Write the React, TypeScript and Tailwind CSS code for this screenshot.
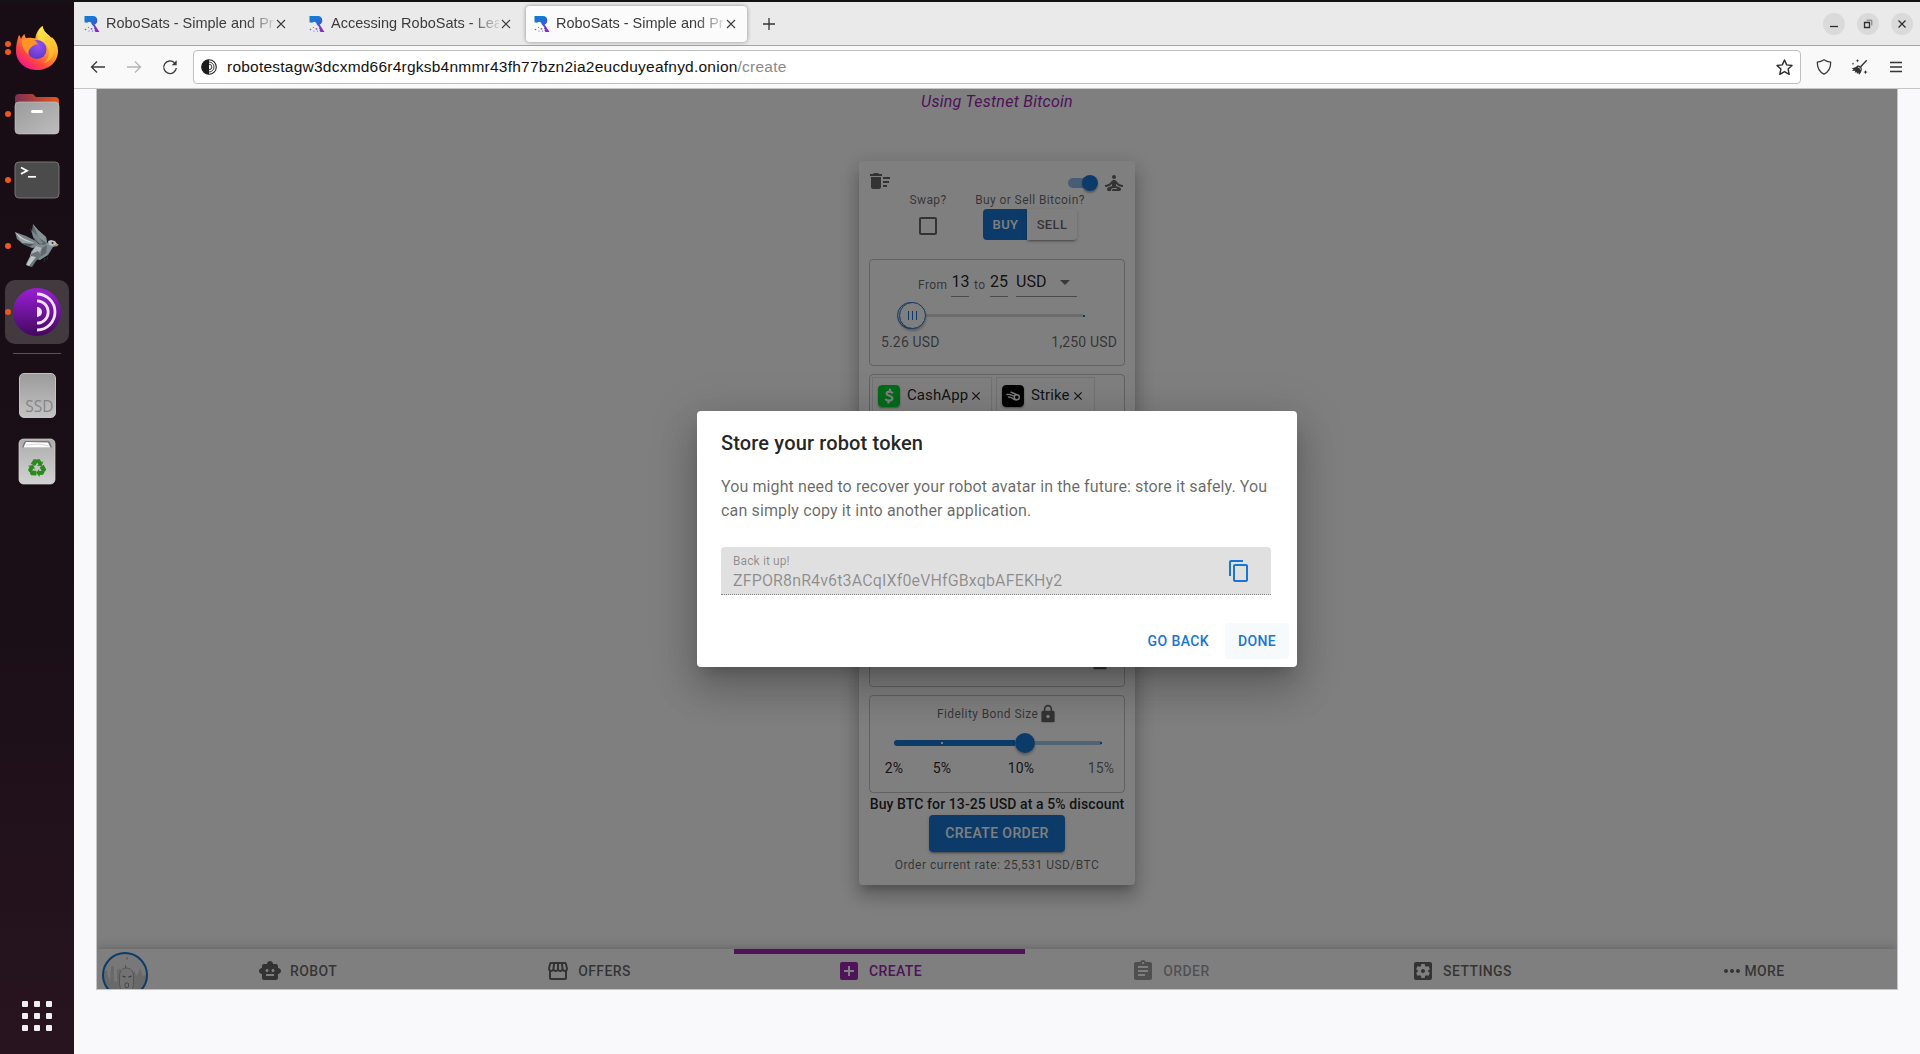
import React from 'react';
import {
  MdAddBox,
  MdArrowDropDown,
  MdAssignment,
  MdCheckBoxOutlineBlank,
  MdClose,
  MdContentCopy,
  MdDeleteSweep,
  MdLock,
  MdMoreHoriz,
  MdOutlineStorefront,
  MdSelfImprovement,
  MdSettingsApplications,
  MdSmartToy,
} from 'react-icons/md';

/* ---------- Dock ---------- */

function FirefoxIcon() {
  return (
    <svg width="44" height="46" viewBox="0 0 44 46">
      <defs>
        <linearGradient id="ffBody" x1="0.85" y1="0.1" x2="0.2" y2="0.95">
          <stop offset="0" stopColor="#ffe94a" />
          <stop offset="0.4" stopColor="#ff9a2a" />
          <stop offset="0.72" stopColor="#ff4a3f" />
          <stop offset="1" stopColor="#f0148a" />
        </linearGradient>
        <radialGradient id="ffGlobe" cx="0.55" cy="0.3" r="0.7">
          <stop offset="0" stopColor="#9a4ff5" />
          <stop offset="1" stopColor="#5a3bc8" />
        </radialGradient>
        <linearGradient id="ffFlame" x1="0" y1="0" x2="0.5" y2="1">
          <stop offset="0" stopColor="#fff24f" />
          <stop offset="1" stopColor="#ffb02a" />
        </linearGradient>
      </defs>
      <path
        d="M4 10c1 1 1.500 2.500 2 4 .8-2.200 2-3.700 3.500-5 .2 2 .8 3.300 1.800 4.300 3-.8 6-.5 9 .2C21 8 24 3 27.500 1c.5 4 3 7 6 9 1 .8 2 2 2.500 3.500l.8-1.500c4 4 6.200 8.500 6.200 14 0 11-9 19-21 19S1 36.500 1 26c0-6 1.200-11.500 3-16z"
        fill="url(#ffBody)"
      />
      <path d="M27.500 1c.5 4 3 7 6 9 6 5 7.500 11 5.500 18-1.500 5-5.500 9-10 10 5-4 6-10 4-15-1.500-4-6-6-9-8-3-3-1-10 3.500-14z" fill="url(#ffFlame)" />
      <circle cx="22" cy="24.500" r="9.500" fill="url(#ffGlobe)" />
      <path d="M7 15c5-2.500 9-1.500 14 1.200l2 3c-3 .3-5 1.300-7 3.300-2 1.800-3 4-2.500 7C9 26 6 20 7 15z" fill="#ff9328" />
    </svg>
  );
}

function FilesIcon() {
  return (
    <svg width="46" height="42" viewBox="0 0 46 42">
      <defs>
        <linearGradient id="flBack" x1="0" x2="1">
          <stop offset="0" stopColor="#7c2f52" />
          <stop offset="1" stopColor="#e9541f" />
        </linearGradient>
        <linearGradient id="flFront" x1="0" y1="0" x2="1" y2="1">
          <stop offset="0" stopColor="#9b9b9b" />
          <stop offset="1" stopColor="#bdbdbd" />
        </linearGradient>
      </defs>
      <path d="M1 5a4 4 0 0 1 4-4h14l3 3h19a4 4 0 0 1 4 4v12H1z" fill="url(#flBack)" />
      <rect x="1" y="9" width="44" height="32" rx="4" fill="url(#flFront)" stroke="#c9c9c9" strokeWidth=".6" />
      <rect x="17" y="17" width="12" height="3" rx="1.500" fill="#fff" />
    </svg>
  );
}

function TerminalIcon() {
  return (
    <svg width="46" height="38" viewBox="0 0 46 38">
      <rect x="1" y="1" width="44" height="36" rx="4" fill="#4b4b4b" stroke="#747474" />
      <path d="M7 6.500l6 3.200-6 3.200" fill="none" stroke="#fff" strokeWidth="1.800" />
      <path d="M14 15.800h8" stroke="#fff" strokeWidth="1.700" />
    </svg>
  );
}

function BirdIcon() {
  return (
    <svg width="46" height="46" viewBox="0 0 46 46">
      <path d="M16 5l2 3 1-7 5 6 8 7 2 10-6 0-8-8z" fill="#5c686b" />
      <path d="M19 1l5 6 8 7 1 6-8-5z" fill="#879193" />
      <path d="M18 8l5 4 6 8-3 1-7-7z" fill="#77878b" />
      <path d="M1 9l11 4 10 5 5 6-9 1-9-4-6-5z" fill="#79848a" />
      <path d="M1 9l8 6 11 5-4 1-8-3z" fill="#c3c9ca" />
      <path d="M4 14l8 4 8 2-5 3-7-3z" fill="#98a2a4" />
      <path d="M8 20l12 1-5 3z" fill="#4a555b" />
      <path d="M23 21l7 1 6-4 4 1 3 2 1 2-5 1-5 8-8 5-8-2-1-6z" fill="#828d91" />
      <path d="M34 18l3-1 4 1 2 3-5 2-3-1z" fill="#b9c0c1" />
      <path d="M22 23l6 2-5 8-6 2-1-3z" fill="#aeb6b7" />
      <path d="M28 25l5-3-1 8-6 4z" fill="#5e696f" />
      <path d="M17 31l7-3 3 5-5 5-4 6-4-1 1-3-3 1z" fill="#69757b" />
      <path d="M17 33l5 1-7 9-3-1z" fill="#c0c7c8" />
      <path d="M31 35l-1 4m4-5l-1 3" stroke="#2d3033" />
      <circle cx="38.500" cy="20" r="1" fill="#3a2a17" />
      <path d="M42 20l3 2-3 .5z" fill="#c79a5a" />
    </svg>
  );
}

function TorIcon() {
  return (
    <svg width="48" height="48" viewBox="0 0 48 48">
      <defs>
        <linearGradient id="torBg" x1="0" y1="0" x2="0" y2="1">
          <stop offset="0" stopColor="#9a1fd6" />
          <stop offset="1" stopColor="#43085f" />
        </linearGradient>
      </defs>
      <circle cx="24" cy="24" r="24" fill="url(#torBg)" />
      <g fill="none" stroke="#f3e3fb" strokeWidth="2.800">
        <path d="M24 6a18 18 0 0 1 0 36" />
        <path d="M24 12.800a11.200 11.200 0 0 1 0 22.400" />
      </g>
      <path d="M24 19a5 5 0 0 1 0 10z" fill="#f3e3fb" />
    </svg>
  );
}

function TrashIcon() {
  return (
    <svg width="38" height="47" viewBox="0 0 38 47">
      <defs>
        <linearGradient id="trBg" x1="0" y1="0" x2="0" y2="1">
          <stop offset="0" stopColor="#adadad" />
          <stop offset="1" stopColor="#d2d2d2" />
        </linearGradient>
      </defs>
      <rect x="1" y="1" width="36" height="45" rx="4.500" fill="url(#trBg)" stroke="#d6d6d6" strokeWidth=".7" />
      <path d="M4 9.500L6 4.500q.5-1.500 2-1.500h22q1.500 0 2 1.500l2 5z" fill="#777" />
      <path d="M5.500 9.500L8 4l22 .5 2.500 5z" fill="#fff" />
      <path d="M8 7l14-1 9 2" stroke="#c4c4c4" fill="none" strokeWidth=".7" />
      <g transform="translate(19 30)" fill="#2a8a1d">
        {[0, 120, 240].map((angle) => (
          <g key={angle} transform={`rotate(${angle})`}>
            <path d="M-6.200-4.200L-3.300-8.700h2.600L.8-6.200-2-1.900z" />
            <path d="M.3-8.700h2.500l1.900 2.900 1.700-.9-1.900 5-4.700-.7 1.700-1-2.600-4z" />
          </g>
        ))}
      </g>
    </svg>
  );
}

function DockItem({ dots = 1, active = false, className = '', children }: { dots?: number; active?: boolean; className?: string; children: React.ReactNode }) {
  return (
    <div className={`flex h-[66px] w-full shrink-0 items-center ${className}`}>
      <div className="flex w-[5px] flex-col gap-[2px]">
        {Array.from({ length: dots }, (_, i) => (
          <span key={i} className="z-10 ml-[5px] h-[6px] w-[6px] rounded-full bg-[#ed5723]" />
        ))}
      </div>
      <div className={`flex h-16 w-16 items-center justify-center rounded-[10px] ${active ? 'bg-[#433a3f]' : ''}`}>{children}</div>
    </div>
  );
}

function Dock() {
  return (
    <aside className="flex h-full w-[74px] shrink-0 flex-col bg-gradient-to-b from-[#180d14] via-[#1b0f17] via-60% to-[#28141f] pt-[13px]">
      <DockItem dots={2}>
        <FirefoxIcon />
      </DockItem>
      <DockItem><FilesIcon /></DockItem>
      <DockItem><TerminalIcon /></DockItem>
      <DockItem><BirdIcon /></DockItem>
      <DockItem active><TorIcon /></DockItem>
      <div className="mt-[8px] ml-[13px] h-px w-12 shrink-0 bg-[#5b5357]" />
      <DockItem dots={0} className="mt-[8px]">
        <div className="flex h-[45px] w-[37px] items-end justify-end rounded-[5px] border border-[#c4c4c4] bg-gradient-to-b from-[#9c9c9c] to-[#c3c3c3] pr-px pb-[3px] font-['Open_Sans'] text-[15.5px] leading-[16px] text-[#858585]">SSD</div>
      </DockItem>
      <DockItem dots={0}><TrashIcon /></DockItem>
      <div className="mt-auto mb-[23px] ml-[22px] grid w-[30px] grid-cols-3 gap-[6px]">
        {Array.from({ length: 9 }, (_, i) => (
          <span key={i} className="h-[6px] w-[6px] rounded-[1px] bg-[#f1eff0]" />
        ))}
      </div>
    </aside>
  );
}

/* ---------- Browser chrome ---------- */

function RoboFavicon({ id }: { id: string }) {
  return (
    <svg width="16" height="16" viewBox="0 0 16 16" className="shrink-0">
      <defs>
        <linearGradient id={id} x1="0.2" y1="0" x2="0.9" y2="1">
          <stop offset="0.300" stopColor="#1976d2" />
          <stop offset="0.600" stopColor="#4a50d0" />
          <stop offset="1" stopColor="#a81cb0" />
        </linearGradient>
      </defs>
      <path d="M.5 0H9c2.700 0 4.300 1.800 4.300 4.400 0 2-1 3.400-2.700 4.100L15.500 16h-4l-1-1.500.5-1-1-.8.3-1.500L8 8.800 7 6.500 5 5.800 3 6.800.5 6.200z" fill={`url(#${id})`} />
      <g fill="#5a5fe0">
        <circle cx="1.500" cy="13.500" r=".8" />
        <circle cx="4.500" cy="11.500" r=".6" />
        <circle cx="7.500" cy="12.800" r=".9" />
        <circle cx="5" cy="15" r=".6" />
        <circle cx="8.500" cy="15" r=".6" />
      </g>
    </svg>
  );
}

function BrowserTab({ id, title, selected = false }: { id: string; title: string; selected?: boolean }) {
  return (
    <div className={`mr-1 flex h-9 w-[221px] shrink-0 items-center rounded-[4px] pl-2 ${selected ? 'bg-[#fbfbfb] shadow-[0_0_4px_rgba(0,0,0,0.4)]' : ''}`}>
      <RoboFavicon id={id} />
      <span className="ml-[6px] w-[168px] text-[14.5px] whitespace-nowrap text-[#3b3b3b] [mask-image:linear-gradient(to_right,black_140px,transparent_172px)]">{title}</span>
      <svg width="10" height="10" viewBox="0 0 10 10" className="ml-[2px] shrink-0">
        <path d="M1 1l8 8M9 1l-8 8" stroke="#3c3c3c" strokeWidth="1.100" />
      </svg>
    </div>
  );
}

function WindowButton({ children }: { children: React.ReactNode }) {
  return (
    <span className="flex h-[22px] w-[22px] items-center justify-center rounded-full bg-[#dadada]">
      <svg width="10" height="10" viewBox="0 0 10 10" fill="none" stroke="#2e2e2e" strokeWidth="1.300">{children}</svg>
    </span>
  );
}

function TabBar() {
  return (
    <div className="flex h-[44px] shrink-0 items-center border-b border-[#a3a3a3] bg-[#eaeaea] pl-[2px]">
      <BrowserTab id="fav1" title="RoboSats - Simple and Pr" />
      <BrowserTab id="fav2" title="Accessing RoboSats - Lea" />
      <BrowserTab id="fav3" title="RoboSats - Simple and Pr" selected />
      <svg width="12" height="12" viewBox="0 0 12 12" className="ml-[12px]">
        <path d="M6 0v12M0 6h12" stroke="#333" strokeWidth="1.300" />
      </svg>
      <div className="ml-auto flex gap-3 pr-[7px]">
        <WindowButton><path d="M1 7.500h8" /></WindowButton>
        <WindowButton>
          <path d="M1.500 3.500h5v5h-5z" />
          <path d="M3.500 1.200h5.300v5.300" stroke="#777" strokeWidth="1" />
        </WindowButton>
        <WindowButton><path d="M1.500 1.500l7 7M8.500 1.500l-7 7" /></WindowButton>
      </div>
    </div>
  );
}

function NavBar() {
  return (
    <div className="flex h-[43px] shrink-0 items-center border-b border-[#c6c6c6] bg-[#f9f9fa] pl-4">
      <svg width="16" height="16" viewBox="0 0 16 16" fill="none" stroke="#3a3a3a" strokeWidth="1.300">
        <path d="M15 8H1.500M7 2.500L1.500 8 7 13.500" />
      </svg>
      <svg width="16" height="16" viewBox="0 0 16 16" fill="none" stroke="#b4b4b4" strokeWidth="1.300" className="ml-5">
        <path d="M1 8h13.500M9 2.500L14.500 8 9 13.500" />
      </svg>
      <svg width="16" height="16" viewBox="0 0 16 16" fill="none" stroke="#3a3a3a" strokeWidth="1.300" className="ml-5">
        <path d="M14.300 9A6.300 6.300 0 1 1 12.500 3.800" />
        <path d="M14.700 1.200v5h-5z" fill="#3a3a3a" stroke="none" />
      </svg>
      <div className="ml-[15px] flex h-[34px] w-[1608px] items-center rounded-[4px] border border-[#bfbfbf] bg-white pr-[7px] pl-[7px]">
        <svg width="16" height="16" viewBox="0 0 16 16" className="shrink-0">
          <circle cx="8" cy="8" r="7.300" fill="#fff" stroke="#222" strokeWidth="1.100" />
          <path d="M8 .7a7.300 7.300 0 0 0 0 14.600z" fill="#1c1c1c" />
          <g fill="none" stroke="#222" strokeWidth=".9">
            <path d="M8 3a5 5 0 0 1 0 10" />
            <path d="M8 5.200a2.800 2.800 0 0 1 0 5.600" />
          </g>
        </svg>
        <span className="ml-[10px] text-[15.5px] tracking-[0.23px] whitespace-nowrap text-[#111]">
          robotestagw3dcxmd66r4rgksb4nmmr43fh77bzn2ia2eucduyeafnyd.onion<span className="text-[#8a8a8a]">/create</span>
        </span>
        <svg width="17" height="17" viewBox="0 0 17 17" fill="none" stroke="#2c2c2c" strokeWidth="1.400" strokeLinejoin="round" className="ml-auto">
          <path d="M8.500 1l2.200 4.900 5.300.6-3.900 3.600 1.100 5.300-4.700-2.700-4.700 2.700 1.100-5.300L1 6.500l5.300-.6z" />
        </svg>
      </div>
      <svg width="16" height="16" viewBox="0 0 16 16" fill="none" stroke="#3a3a3a" strokeWidth="1.300" strokeLinejoin="round" className="ml-[15px]">
        <path d="M8 .8C6 2.200 3.800 2.900 1.300 3.100 1.200 9 3.300 13 8 15.200 12.700 13 14.800 9 14.700 3.100 12.200 2.900 10 2.200 8 .8z" />
      </svg>
      <svg width="18" height="17" viewBox="0 0 18 17" fill="#333" className="ml-[19px]">
        <path d="M15.300.8l.9.900-6 6.500-1.100-1z" />
        <path d="M6.500 6.500c2-.5 4.800 1.500 4.300 4-.3 2-1.300 4-2.800 5.200l-.8-2.200-1 1.500-.8-2-1.700.8.600-2L1 12l1.500-1.800L.5 9.300c2-.3 4.500-1 6-2.800z" />
        <path d="M7 8.300c1.300 0 2.500 1 2.500 2.300" stroke="#f9f9fa" fill="none" strokeWidth=".8" />
        <path d="M6.500 0l.5 1.300L8.300 1.800 7 2.300 6.500 3.600 6 2.300 4.700 1.800 6 1.300zM2 3.500l.4.900.9.400-.9.400-.4.900-.4-.9-.9-.4.900-.4zM14.500 11l.6 1.500 1.500.6-1.500.6-.6 1.500-.6-1.500-1.500-.6 1.500-.6z" />
      </svg>
      <svg width="12" height="12" viewBox="0 0 12 12" className="ml-[21px]" stroke="#333" strokeWidth="1.300">
        <path d="M0 1.500h12M0 6h12M0 10.500h12" />
      </svg>
    </div>
  );
}

/* ---------- Order form ---------- */

const box = 'rounded-[4px] border border-black/[0.23]';
const caption = 'text-[12px] leading-4 tracking-[0.4px] text-black/60 whitespace-nowrap';

function AmountBox() {
  return (
    <section className={`${box} h-[107px] shrink-0`}>
      <div className="flex h-[37px] items-end justify-start pl-[48px]">
        <span className={`${caption} mb-[4px] w-[33px]`}>From</span>
        <span className="flex h-[29px] w-[18px] items-center justify-center border-b border-black/[0.42] pl-px text-[16px] text-black/[0.87]">13</span>
        <span className={`${caption} mb-[4px] w-[21px] pl-[5px]`}>to</span>
        <span className="flex h-[29px] w-[18px] items-center justify-center border-b border-black/[0.42] text-[16px] text-black/[0.87]">25</span>
        <span className="ml-[8px] flex h-[29px] w-[61px] items-center justify-between border-b border-black/[0.42] text-[16px] text-black/[0.87]">
          USD
          <MdArrowDropDown className="h-6 w-6 text-black/[0.54]" />
        </span>
      </div>
      <div className="mt-[5px] ml-[27px] flex h-[27px] items-center">
        <span className="relative h-[27px] w-[29px] shrink-0">
          <span className="absolute top-0 left-0 h-[27px] w-[27px] rounded-full border border-[#1976d2] bg-white" />
          <span className="absolute top-0 left-[2px] flex h-[27px] w-[27px] items-center justify-center gap-[3px] rounded-full border border-[#1976d2] bg-white shadow-[0_2px_3px_rgba(0,0,0,0.3)]">
            <span className="h-[9px] w-px bg-[#1976d2]" />
            <span className="h-[9px] w-px bg-[#1976d2]" />
            <span className="h-[9px] w-px bg-[#1976d2]" />
          </span>
        </span>
        <span className="h-[3px] w-[157px] bg-[#d8d8d8]" />
        <span className="h-[2px] w-[2px] bg-[#1976d2]" />
      </div>
      <div className="mt-[3px] flex justify-between pr-[7px] pl-[11px] text-[14px] leading-5 tracking-[0.15px] text-black/60">
        <span>5.26 USD</span>
        <span>1,250 USD</span>
      </div>
    </section>
  );
}

function MethodChip({ icon, label, className }: { icon: React.ReactNode; label: string; className: string }) {
  return (
    <div className={`flex h-[37px] items-center border border-black/10 pl-[5px] ${className}`}>
      {icon}
      <span className="ml-[7px] text-[15px] tracking-[0.1px] text-black/[0.87]">{label}</span>
      <MdClose className="ml-px h-[14px] w-[14px] text-black/[0.87]" />
    </div>
  );
}

function MethodBox() {
  return (
    <section className={`${box} mt-2 flex h-[313px] shrink-0 flex-col justify-between`}>
      <div className="flex gap-1 pt-[2px] pl-[2px]">
        <MethodChip
          label="CashApp"
          className="w-[120px]"
          icon={
            <svg width="22" height="22" viewBox="0 0 22 22" className="shrink-0 rounded-[4px] shadow-[0_1px_2px_rgba(0,0,0,0.4)]">
              <rect width="22" height="22" rx="4" fill="#00d632" />
              <path d="M14.800 8.200c-1-1-2.200-1.500-3.500-1.500-1.600 0-2.700.7-2.700 1.900 0 2.800 5.800 1.400 5.800 4.700 0 1.500-1.400 2.300-3.200 2.300-1.600 0-3-.6-4-1.700M12.200 3.800l-.6 2.900M10.800 15.600l-.6 2.800" fill="none" stroke="#fff" strokeWidth="2.200" />
            </svg>
          }
        />
        <MethodChip
          label="Strike"
          className="w-[99px]"
          icon={
            <svg width="22" height="22" viewBox="0 0 22 22" className="shrink-0 rounded-[4px] shadow-[0_1px_2px_rgba(0,0,0,0.4)]">
              <rect width="22" height="22" rx="4" fill="#000" />
              <g fill="none" stroke="#fff" strokeWidth="1.400" strokeLinecap="round">
                <circle cx="14.800" cy="12.200" r="2.500" />
                <path d="M9 7.200l5.500 2.300M5 9.500c2-.4 4.500.2 7 1.600M6.500 12c1.500 0 3 .6 4.500 1.600 1 .7 2 1.100 3 1.100" />
              </g>
            </svg>
          }
        />
      </div>
      <div className="flex justify-end pr-[14px] pb-[15px]">
        <MdLock className="h-5 w-5 text-black/60" />
      </div>
    </section>
  );
}

function BondBox() {
  return (
    <section className={`${box} mt-2 h-[98px] shrink-0`}>
      <div className="flex h-[35px] items-center pl-[67px]">
        <span className={`${caption} w-[101px]`}>Fidelity Bond Size</span>
        <MdLock className="h-5 w-5 text-black/60" />
      </div>
      <div className="mt-[2px] ml-[24px] flex h-5 items-center">
        <span className="flex h-[6px] w-[121px] items-center rounded-l-[3px] bg-[#1976d2] pl-[47px]">
          <span className="h-[2px] w-[2px] bg-white" />
        </span>
        <span className="h-5 w-5 rounded-full bg-[#1976d2] shadow-[0_2px_3px_rgba(0,0,0,0.3)]" />
        <span className="h-1 w-[66px] bg-[#a3c8ed]" />
        <span className="-ml-[1px] h-[2px] w-[2px] bg-[#1976d2]" />
      </div>
      <div className="mt-[5px] grid grid-cols-[48px_48px_110px_50px] text-center text-[14px] leading-5 tracking-[0.15px] text-black/[0.87]">
        <span>2%</span>
        <span>5%</span>
        <span>10%</span>
        <span className="text-black/60">15%</span>
      </div>
    </section>
  );
}

function OrderCard() {
  return (
    <main className="flex h-[724px] w-[276px] flex-col rounded-[4px] bg-white px-[10px] shadow-[0_7px_8px_-4px_rgba(0,0,0,0.2),0_12px_17px_2px_rgba(0,0,0,0.14),0_5px_22px_4px_rgba(0,0,0,0.12)]">
      <div className="flex h-[31px] shrink-0 items-start justify-between">
        <MdDeleteSweep className="mt-2 -ml-px h-6 w-6 text-black/60" />
        <div className="mt-[10px] -mr-px flex items-center">
          <span className="flex h-[10px] w-[28px] items-center justify-end rounded-full bg-[#8cbae8]">
            <span className="-mr-[2px] h-4 w-4 shrink-0 rounded-full bg-[#1976d2] shadow-[0_2px_2px_rgba(0,0,0,0.3)]" />
          </span>
          <MdSelfImprovement className="ml-[6px] h-6 w-6 text-black/60" />
        </div>
      </div>
      <div className="flex h-[67px] shrink-0 justify-start pl-[19px]">
        <div className="flex w-20 flex-col items-center">
          <span className={caption}>Swap?</span>
          <MdCheckBoxOutlineBlank className="mt-[6px] h-6 w-6 text-black/60" />
        </div>
        <div className="flex w-[124px] flex-col items-center">
          <span className={caption}>Buy or Sell Bitcoin?</span>
          <div className="mt-px flex h-[31px] rounded-[4px] text-[13px] font-medium tracking-[0.37px]">
            <span className="flex w-11 items-center justify-center rounded-l-[4px] bg-[#1976d2] pl-px text-white">BUY</span>
            <span className="flex w-[50px] items-center justify-center rounded-r-[4px] bg-white text-black/60 shadow-[0_3px_1px_-2px_rgba(0,0,0,0.2),0_2px_2px_rgba(0,0,0,0.14),0_1px_5px_rgba(0,0,0,0.12)]">SELL</span>
          </div>
        </div>
      </div>
      <AmountBox />
      <MethodBox />
      <BondBox />
      <p className="flex h-[22px] shrink-0 items-center justify-center text-[14px] font-medium tracking-[0.1px] whitespace-nowrap text-black/[0.87]">Buy BTC for 13-25 USD at a 5% discount</p>
      <button className="mx-auto flex h-[37px] w-[136px] shrink-0 items-center justify-center rounded-[4px] bg-[#1976d2] text-[14px] font-medium tracking-[0.4px] text-white shadow-[0_3px_1px_-2px_rgba(0,0,0,0.2),0_2px_2px_rgba(0,0,0,0.14),0_1px_5px_rgba(0,0,0,0.12)]">CREATE ORDER</button>
      <p className="pt-[5px] text-center text-[12px] leading-4 tracking-[0.47px] whitespace-nowrap text-black/60">Order current rate: 25,531 USD/BTC</p>
    </main>
  );
}

/* ---------- Bottom navigation ---------- */

const navItems = [
  { label: 'ROBOT', Icon: MdSmartToy, color: 'text-black/60', gap: 'gap-2' },
  { label: 'OFFERS', Icon: MdOutlineStorefront, color: 'text-black/60', gap: 'gap-2' },
  { label: 'CREATE', Icon: MdAddBox, color: 'text-[#9c27b0]', gap: 'gap-2' },
  { label: 'ORDER', Icon: MdAssignment, color: 'text-black/[0.38]', gap: 'gap-2' },
  { label: 'SETTINGS', Icon: MdSettingsApplications, color: 'text-black/60', gap: 'gap-2' },
  { label: 'MORE', Icon: MdMoreHoriz, color: 'text-black/60', gap: 'gap-0' },
];

function RobotAvatar() {
  return (
    <svg width="46" height="46" viewBox="0 0 46 46" className="mt-[3px] ml-[5px] shrink-0">
      <clipPath id="avClip"><circle cx="23" cy="23" r="22" /></clipPath>
      <g clipPath="url(#avClip)">
        <rect width="46" height="46" fill="#f0f0f0" />
        <path d="M0 46V20l5-2 1 6 2 5 1-15h3v15l3 1V18l3-2 3 8h8l3-5 3 5 3-8 3 8 5-2v24z" fill="#d2d2d2" />
        <path d="M17.500 24c0-5 3-8 7-8s7 3 7 8v7c0 6-3 10-7 10s-7-4-7-10z" fill="#e4e4e4" stroke="#a8a8a8" />
        <path d="M20.500 24l3 1.200M26.500 25.200l3-1.200" stroke="#777" strokeWidth="1.300" />
        <rect x="23" y="31" width="3.500" height="4.500" rx="1" fill="none" stroke="#888" />
        <path d="M25 5v2.500M23.500 13v3" stroke="#888" strokeWidth=".8" />
        <path d="M12 46c2-4 7-5 12.500-5s11 1 12.500 5z" fill="#ddd" stroke="#aaa" />
      </g>
      <circle cx="23" cy="23" r="22" fill="none" stroke="#1976d2" strokeWidth="2" />
    </svg>
  );
}

function BottomNav() {
  return (
    <nav className="flex h-10 shrink-0 bg-white shadow-[0_-3px_5px_-1px_rgba(0,0,0,0.1),0_-6px_14px_rgba(0,0,0,0.07)]">
      <div className="w-[55px] shrink-0 overflow-hidden"><RobotAvatar /></div>
      {navItems.map(({ label, Icon, color, gap }) => (
        <div key={label} className={`flex w-[291px] shrink-0 flex-col ${color}`}>
          <span className={`h-[5px] ${label === 'CREATE' ? 'bg-[#9c27b0]' : ''}`} />
          <span className={`flex h-[34px] items-center justify-center text-[14px] font-medium tracking-[0.4px] ${gap}`}>
            <Icon className="h-6 w-6" />
            {label}
          </span>
        </div>
      ))}
    </nav>
  );
}

/* ---------- Token dialog ---------- */

function TokenDialog() {
  return (
    <div className="flex h-[256px] w-[600px] flex-col rounded-[4px] bg-white shadow-[0_11px_15px_-7px_rgba(0,0,0,0.2),0_24px_38px_3px_rgba(0,0,0,0.14),0_9px_46px_8px_rgba(0,0,0,0.12)]">
      <h2 className="px-6 py-4 text-[20px] leading-8 font-medium tracking-[0.15px] text-black/[0.87]">Store your robot token</h2>
      <div className="px-6 pb-5">
        <p className="text-[16px] leading-6 tracking-[0.15px] text-black/60">
          <span className="tracking-[0.11px]">You might need to recover your robot avatar in the future: store it safely. You</span>
          <br />
          can simply copy it into another application.
        </p>
        <div className="mt-6 flex h-12 w-[550px] items-center justify-between rounded-t-[4px] border-b border-dotted border-black/[0.42] bg-[#e0e0e0] pr-5 pl-3">
          <div className="pt-[3px] text-black/[0.38]">
            <div className="text-[12px] leading-4 tracking-[0.11px]">Back it up!</div>
            <div className="text-[16px] leading-[23px] tracking-[0.13px]">ZFPOR8nR4v6t3ACqIXf0eVHfGBxqbAFEKHy2</div>
          </div>
          <MdContentCopy className="h-6 w-6 text-[#1976d2]" />
        </div>
      </div>
      <div className="flex justify-end gap-2 p-2 text-[14px] leading-6 font-medium tracking-[0.4px] text-[#1976d2]">
        <button className="h-9 px-2">GO BACK</button>
        <button className="h-9 w-16 rounded-[4px] bg-[#1976d2]/[0.04]">DONE</button>
      </div>
    </div>
  );
}

export default function App() {
  return (
    <div className="flex h-[1054px] w-[1920px] flex-col overflow-hidden bg-[#111] font-['Liberation_Sans',sans-serif]">
      <div className="h-[2px] shrink-0 bg-[#131111]" />
      <div className="flex min-h-0 flex-1">
        <Dock />
        <div className="flex flex-1 flex-col bg-[#f9f9fb]">
          <TabBar />
          <NavBar />
          <div className="relative ml-[22px] flex h-[901px] w-[1802px] shrink-0 flex-col overflow-hidden border-x border-b border-[#c4c4c6] bg-white font-['Roboto',sans-serif]">
            <p className="h-[72px] shrink-0 pt-px text-center text-[16px] leading-6 tracking-[0.27px] text-[#9c27b0] italic">Using Testnet Bitcoin</p>
            <div className="flex flex-1 items-start justify-center"><OrderCard /></div>
            <BottomNav />
            <div className="absolute inset-0 flex items-center justify-center bg-black/50">
              <TokenDialog />
            </div>
          </div>
        </div>
      </div>
    </div>
  );
}
